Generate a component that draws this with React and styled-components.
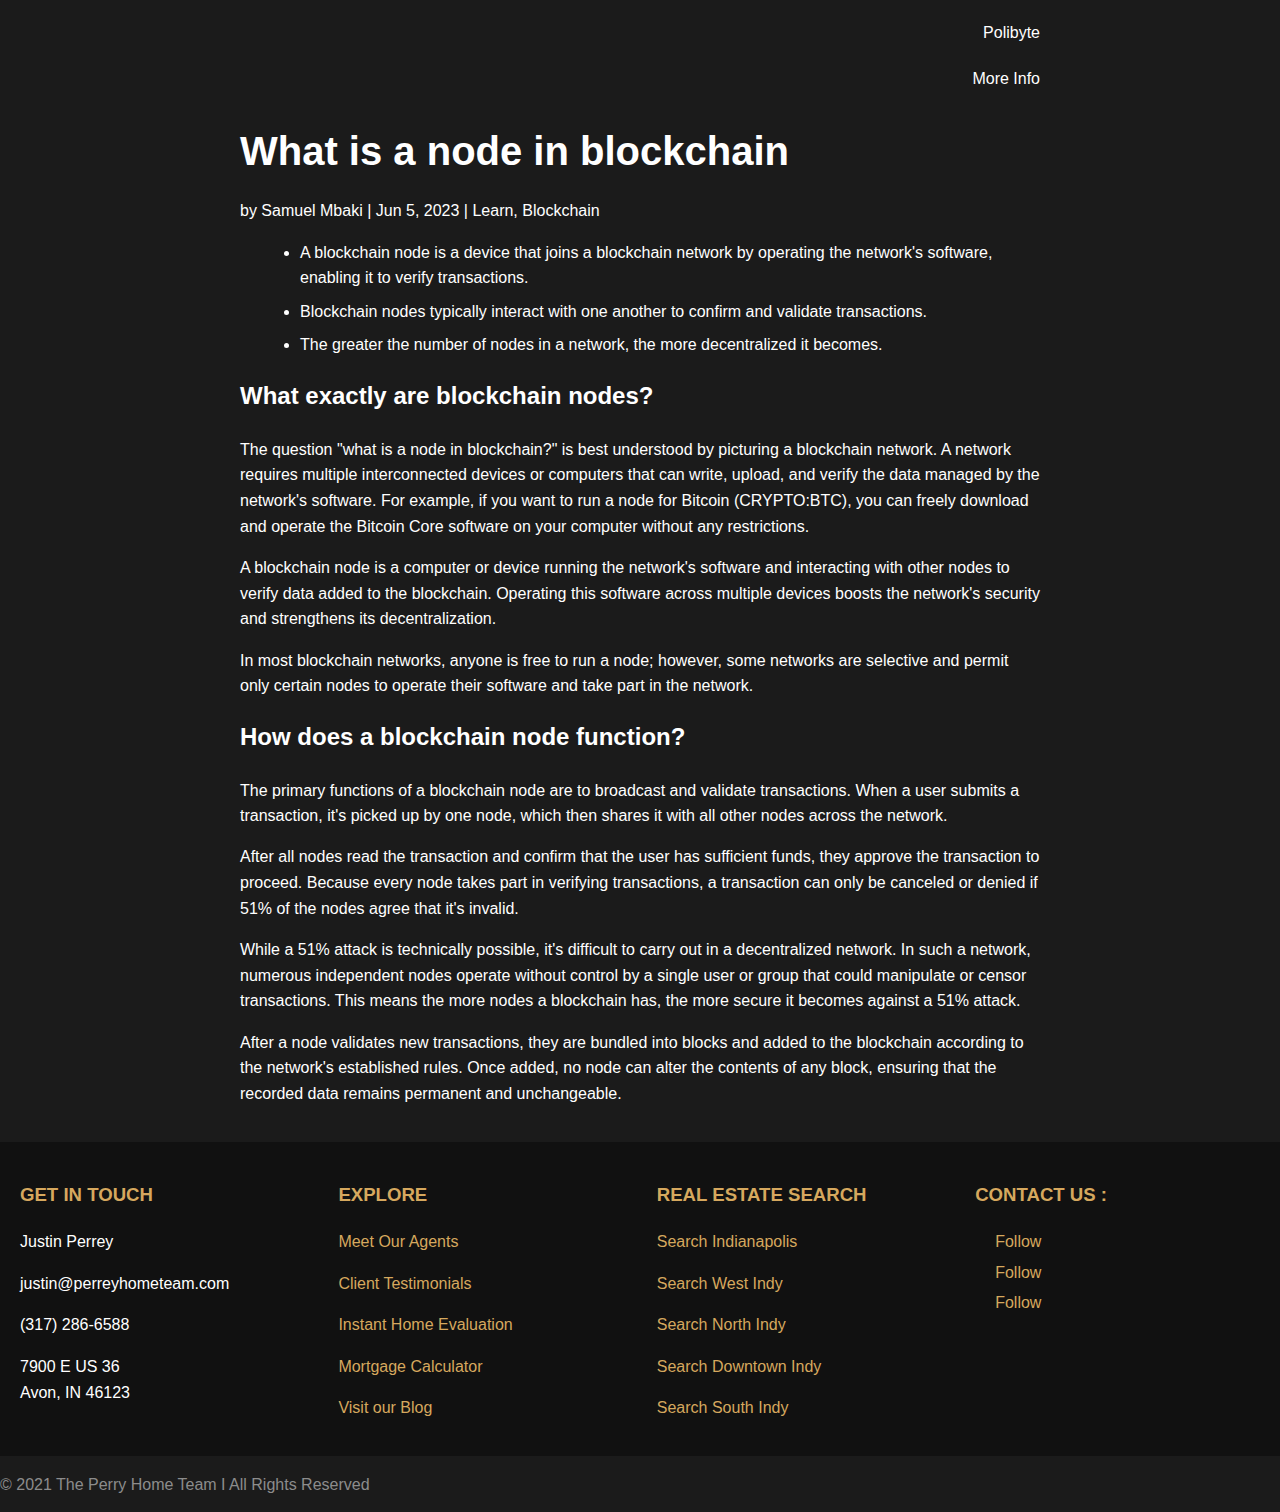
import React from "react";
import styled, { createGlobalStyle } from "styled-components";

const Global = createGlobalStyle`
  html, body { margin: 0; padding: 0; background: #1b1b1b; }
  body { font-family: "Liberation Sans", Arial, sans-serif; color: #fff; }
  * { box-sizing: border-box; }
`;

const Page = styled.div`
  background: #1b1b1b;
  min-height: 1512px;
  display: flex;
  flex-direction: column;
`;

const Container = styled.div`
  width: 800px;
  margin: 0 auto;
`;

const Nav = styled.nav`
  display: flex;
  flex-direction: column;
  align-items: flex-end;
  padding-top: 10px;
`;

const NavLink = styled.a`
  color: #fff;
  text-decoration: none;
  font-size: 16px;
  line-height: 20px;
  padding: 13px 0;
`;

const Title = styled.h1`
  font-size: 40px;
  line-height: 48px;
  font-weight: 700;
  margin: 25px 0 23px;
`;

const Meta = styled.p`
  font-size: 16px;
  line-height: 25.6px;
  margin: 0;
`;

const List = styled.ul`
  margin: 16px 0 0;
  padding-left: 60px;
`;

const Item = styled.li`
  font-size: 16px;
  line-height: 25.6px;
  & + & { margin-top: 8px; }
`;

const H2 = styled.h2`
  font-size: 24px;
  line-height: 28.8px;
  font-weight: 700;
  margin: 24.5px 0 25.5px;
`;

const P = styled.p`
  font-size: 16px;
  line-height: 25.6px;
  margin: 0;
  & + & { margin-top: 15.8px; }
`;

const Article = styled.article`
  padding-bottom: 35.6px;
`;

const Footer = styled.footer`
  background: #111111;
  padding: 42px 0 35px 20px;
  display: grid;
  grid-template-columns: repeat(4, 318.4px);
`;

const Col = styled.div`
  display: flex;
  flex-direction: column;
`;

const FHead = styled.h4`
  color: #d6a85e;
  font-size: 18.6px;
  line-height: 22px;
  font-weight: 700;
  margin: 0 0 23px;
  text-transform: uppercase;
`;

const FItem = styled.a`
  color: ${(p) => (p.$gold ? "#d6a85e" : "#fff")};
  text-decoration: none;
  font-size: 16px;
  line-height: 26px;
  display: block;
  & + & { margin-top: 15.5px; }
`;

const Follow = styled.a`
  color: #d6a85e;
  text-decoration: none;
  font-size: 16px;
  line-height: 26px;
  padding-left: 20px;
  display: block;
  & + & { margin-top: 4.5px; }
`;

const Bottom = styled.div`
  background: #1b1b1b;
  color: #8c8c8c;
  font-size: 16px;
  line-height: 26px;
  padding: 16px 0 15px;
`;

export default function App() {
  return (
    <Page>
      <Global />
      <Container>
        <Nav>
          <NavLink href="#">Polibyte</NavLink>
          <NavLink href="#">More Info</NavLink>
        </Nav>
        <Article>
          <Title>What is a node in blockchain</Title>
          <Meta>by Samuel Mbaki | Jun 5, 2023 | Learn, Blockchain</Meta>
          <List>
            <Item>A blockchain node is a device that joins a blockchain network by operating the network's software, enabling it to verify transactions.</Item>
            <Item>Blockchain nodes typically interact with one another to confirm and validate transactions.</Item>
            <Item>The greater the number of nodes in a network, the more decentralized it becomes.</Item>
          </List>
          <H2>What exactly are blockchain nodes?</H2>
          <P>The question "what is a node in blockchain?" is best understood by picturing a blockchain network. A network requires multiple interconnected devices or computers that can write, upload, and verify the data managed by the network's software. For example, if you want to run a node for Bitcoin (CRYPTO:BTC), you can freely download and operate the Bitcoin Core software on your computer without any restrictions.</P>
          <P>A blockchain node is a computer or device running the network's software and interacting with other nodes to verify data added to the blockchain. Operating this software across multiple devices boosts the network's security and strengthens its decentralization.</P>
          <P>In most blockchain networks, anyone is free to run a node; however, some networks are selective and permit only certain nodes to operate their software and take part in the network.</P>
          <H2>How does a blockchain node function?</H2>
          <P>The primary functions of a blockchain node are to broadcast and validate transactions. When a user submits a transaction, it's picked up by one node, which then shares it with all other nodes across the network.</P>
          <P>After all nodes read the transaction and confirm that the user has sufficient funds, they approve the transaction to proceed. Because every node takes part in verifying transactions, a transaction can only be canceled or denied if 51% of the nodes agree that it's invalid.</P>
          <P>While a 51% attack is technically possible, it's difficult to carry out in a decentralized network. In such a network, numerous independent nodes operate without control by a single user or group that could manipulate or censor transactions. This means the more nodes a blockchain has, the more secure it becomes against a 51% attack.</P>
          <P>After a node validates new transactions, they are bundled into blocks and added to the blockchain according to the network's established rules. Once added, no node can alter the contents of any block, ensuring that the recorded data remains permanent and unchangeable.</P>
        </Article>
      </Container>
      <Footer>
        <Col>
          <FHead>Get in Touch</FHead>
          <FItem as="div">Justin Perrey</FItem>
          <FItem href="#">justin@perreyhometeam.com</FItem>
          <FItem href="#">(317) 286-6588</FItem>
          <FItem as="div">7900 E US 36<br />Avon, IN 46123</FItem>
        </Col>
        <Col>
          <FHead>Explore</FHead>
          <FItem $gold href="#">Meet Our Agents</FItem>
          <FItem $gold href="#">Client Testimonials</FItem>
          <FItem $gold href="#">Instant Home Evaluation</FItem>
          <FItem $gold href="#">Mortgage Calculator</FItem>
          <FItem $gold href="#">Visit our Blog</FItem>
        </Col>
        <Col>
          <FHead>Real Estate Search</FHead>
          <FItem $gold href="#">Search Indianapolis</FItem>
          <FItem $gold href="#">Search West Indy</FItem>
          <FItem $gold href="#">Search North Indy</FItem>
          <FItem $gold href="#">Search Downtown Indy</FItem>
          <FItem $gold href="#">Search South Indy</FItem>
        </Col>
        <Col>
          <FHead>Contact Us :</FHead>
          <Follow href="#">Follow</Follow>
          <Follow href="#">Follow</Follow>
          <Follow href="#">Follow</Follow>
        </Col>
      </Footer>
      <Bottom>© 2021 The Perry Home Team I All Rights Reserved</Bottom>
    </Page>
  );
}
